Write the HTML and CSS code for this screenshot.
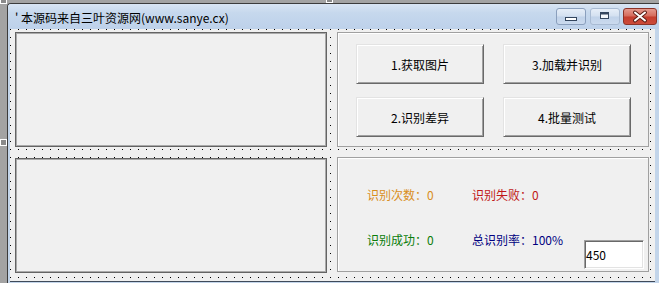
FILE: index.html
```html
<!DOCTYPE html>
<html lang="zh-CN">
<head>
<meta charset="utf-8">
<title>三叶资源网</title>
<link rel="stylesheet" href="styles.css">
</head>
<body>
  <div class="handle h-tl"></div>
  <div class="handle h-tm"></div>
  <div class="handle h-ml"></div>
  <div class="window">
    <div class="titlebar">
      <span class="title">' 本源码来自三叶资源网(www.sanye.cx)</span>
      <div class="caption-buttons">
        <div class="cbtn cmin">
          <svg width="30" height="17" viewBox="0 0 30 17"><rect x="9.5" y="9.5" width="11" height="3" fill="#fff" stroke="#34465e"/></svg>
        </div>
        <div class="cbtn cmax">
          <svg width="30" height="17" viewBox="0 0 30 17"><rect x="10.5" y="4.5" width="8" height="6" fill="#f4f7fb" stroke="#34465e"/><rect x="11" y="5" width="7" height="1.5" fill="#34465e"/></svg>
        </div>
        <div class="cbtn cclose">
          <svg width="34" height="17" viewBox="0 0 34 17"><path d="M12 4.5 L22 12.5 M22 4.5 L12 12.5" stroke="#5a1e16" stroke-width="4" stroke-linecap="round"/><path d="M12 4.5 L22 12.5 M22 4.5 L12 12.5" stroke="#fff" stroke-width="2" stroke-linecap="round"/></svg>
        </div>
      </div>
    </div>
    <div class="client">
      <div class="frame"></div>
      <div class="panel btn-panel">
        <div class="btn">1.获取图片</div>
        <div class="btn">3.加载并识别</div>
        <div class="btn">2.识别差异</div>
        <div class="btn">4.批量测试</div>
      </div>
      <div class="frame frame2"></div>
      <div class="panel stats">
        <div class="lbl orange">识别次数：0</div>
        <div class="lbl red">识别失败：0</div>
        <div class="lbl green">识别成功：0</div>
        <div class="lbl navy">总识别率：100%</div>
        <div class="textbox">450</div>
      </div>
    </div>
  </div>
</body>
</html>
```
FILE: styles.css
```css
html, body {
  margin: 0;
}
body {
  width: 659px;
  height: 283px;
  overflow: hidden;
  box-sizing: border-box;
  padding: 3px 0 0 7px;
  background: #a3a3a3;
  position: relative;
  font-family: "Noto Sans CJK SC", "Noto Sans", sans-serif;
  color: #000;
}
.handle {
  position: absolute;
  width: 7px;
  height: 7px;
  box-sizing: border-box;
  border: 1px solid #fff;
  background: #8a8a8a;
}
.h-tl { left: 0; top: -3px; }
.h-tm { left: 326px; top: -4px; }
.h-ml { left: 0; top: 139px; }

.window {
  width: 652px;
  height: 280px;
  box-sizing: border-box;
  border-left: 1px solid #3c3c3c;
  border-top: 1px solid #3c3c3c;
  border-top-left-radius: 4px;
  background: #c3d5ea;
  display: flex;
  flex-direction: column;
}
.titlebar {
  height: 25px;
  flex: none;
  display: flex;
  align-items: flex-start;
  border-top-left-radius: 3px;
  background: linear-gradient(to bottom, #d9e5f4 0%, #c6d8ed 35%, #bdd1ea 100%);
}
.title {
  font-size: 12px;
  line-height: 16px;
  padding: 6px 0 0 7px;
  white-space: nowrap;
}
.caption-buttons {
  margin: 4px 2px 0 auto;
  display: flex;
  gap: 4px;
}
.cbtn {
  height: 17px;
  box-sizing: border-box;
  border: 1px solid #8a9fbd;
  border-radius: 3px;
  display: flex;
  align-items: center;
  justify-content: center;
  overflow: hidden;
}
.cbtn svg { display: block; flex: none; }
.cmin, .cmax {
  width: 30px;
  background: linear-gradient(to bottom, #e6eef8 0%, #d3e0f0 48%, #c0d2e9 52%, #cbdaee 100%);
}
.cmax { border-color: #a9bbd3; }
.cclose {
  width: 34px;
  margin-left: -1px;
  border-color: #8b3227;
  background: linear-gradient(to bottom, #e59a8e 0%, #d56a5b 48%, #c43d2e 52%, #cc4b3a 100%);
}

.client {
  flex: none;
  margin: 0 4px 0 2px;
  border-bottom: 1px solid #3f4a5a;
  padding: 3px 0 0 5px;
  box-sizing: border-box;
  height: 253px;
  background-color: #000;
  background-image:
    linear-gradient(to right, transparent 1px, #f0f0f0 1px),
    linear-gradient(to bottom, transparent 1px, #f0f0f0 1px);
  background-size: 8px 8px;
  display: grid;
  grid-template-columns: 312px 312px;
  grid-template-rows: 115px 115px;
  column-gap: 10px;
  row-gap: 10px;
  align-items: start;
}
.frame {
  height: 115px;
  box-sizing: border-box;
  background: #f0f0f0;
  border: 1px solid #646464;
  box-shadow: inset 0 0 0 1px #aaaaaa;
}
.frame2 { margin-top: 1px; }
.panel {
  height: 115px;
  box-sizing: border-box;
  background: #f0f0f0;
  border: 1px solid #a0a0a0;
  box-shadow: inset 1px 1px 0 #fff;
}
.btn-panel {
  padding: 11px 0 0 18px;
  display: grid;
  grid-template-columns: 128px 128px;
  grid-auto-rows: 40px;
  column-gap: 19px;
  row-gap: 13px;
  align-content: start;
}
.btn {
  box-sizing: border-box;
  border: 1px solid;
  border-color: #e3e3e3 #696969 #696969 #e3e3e3;
  box-shadow: inset 1px 1px 0 #fff, inset -1px -1px 0 #a0a0a0;
  background: #f0f0f0;
  font-size: 12px;
  display: flex;
  align-items: center;
  justify-content: center;
  padding-top: 1px;
}
.stats {
  padding: 30px 0 0 29px;
  display: grid;
  grid-template-columns: 105px 112px 60px;
  row-gap: 31px;
  align-items: start;
  align-content: start;
  font-size: 12px;
  line-height: 14px;
}
.lbl { white-space: nowrap; }
.orange { color: #d98e1c; grid-column: 1; grid-row: 1; }
.red { color: #c01818; grid-column: 2; grid-row: 1; }
.green { color: #0a7d0a; grid-column: 1; grid-row: 2; }
.navy { color: #000080; grid-column: 2; grid-row: 2; }
.textbox {
  grid-column: 3;
  grid-row: 2;
  margin-top: 7px;
  height: 29px;
  box-sizing: border-box;
  background: #fff;
  border: 1px solid;
  border-color: #a0a0a0 #fff #fff #a0a0a0;
  box-shadow: inset 1px 1px 0 #696969, inset -1px -1px 0 #e3e3e3;
  padding-left: 1px;
  line-height: 27px;
  font-size: 12px;
  color: #000;
}
```
